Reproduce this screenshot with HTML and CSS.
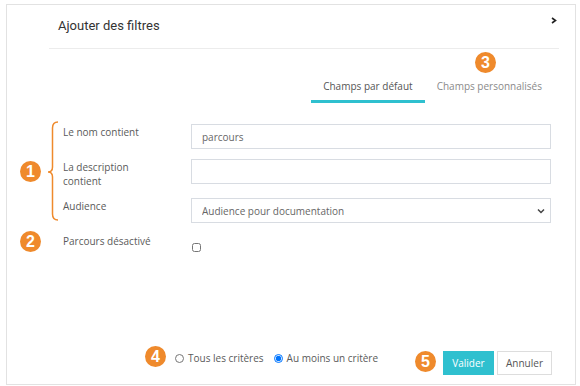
FILE: index.html
```html
<!DOCTYPE html>
<html lang="fr">

<head>
    <meta charset="UTF-8">
    <meta name="viewport" content="width=device-width, initial-scale=1.0">
    <title>Ajouter des filtres</title>
    <link rel="stylesheet" href="styles.css">
</head>

<body>
    <div class="dialog">
        <div class="head">
            <h1 class="title">Ajouter des filtres</h1>
        </div>
        <span class="close">
            <svg width="6" height="7" viewBox="0 0 6 7"><path d="M1 1 L4.5 3.5 L1 6" fill="none" stroke="#222" stroke-width="1.6"/></svg>
        </span>

        <div class="tabs">
            <span class="tab active">Champs par défaut</span>
            <span class="tab">Champs personnalisés</span>
        </div>

        <div class="form">
            <div class="row">
                <label class="lbl">Le nom contient</label>
                <input class="field" type="text" value="parcours">
            </div>
            <div class="row">
                <label class="lbl">La description<br>contient</label>
                <input class="field" type="text" value="">
            </div>
            <div class="row">
                <label class="lbl">Audience</label>
                <div class="select_wrap">
                    <select class="field">
                        <option>Audience pour documentation</option>
                    </select>
                    <svg class="arrow" width="8" height="6" viewBox="0 0 8 6"><path d="M1 1.5 L4 4.5 L7 1.5" fill="none" stroke="#444" stroke-width="1.5"/></svg>
                </div>
            </div>
            <div class="row">
                <label class="lbl">Parcours désactivé</label>
                <input class="check" type="checkbox">
            </div>
        </div>

        <div class="foot">
            <div class="radios">
                <label><input type="radio" name="mode">Tous les critères</label>
                <label><input type="radio" name="mode" checked>Au moins un critère</label>
            </div>
            <div class="btns">
                <button class="btn primary">Valider</button>
                <button class="btn">Annuler</button>
            </div>
        </div>

        <!-- annotations -->
        <svg class="brace" width="12" height="100" viewBox="0 0 12 100"><path d="M11 1 Q5.5 1 5.5 7 L5.5 46 Q5.5 51 1 51 Q5.5 51 5.5 56 L5.5 93 Q5.5 99 11 99" fill="none" stroke="#ef8a2c" stroke-width="1.5"/></svg>
        <span class="badge b1">1</span>
        <span class="badge b2">2</span>
        <span class="badge b3">3</span>
        <span class="badge b4">4</span>
        <span class="badge b5">5</span>
    </div>
</body>

</html>
```

FILE: styles.css
```css
* {
    margin: 0;
    padding: 0;
    box-sizing: border-box;
}

body {
    background: #fff;
    font-family: "Open Sans", "Liberation Sans", sans-serif;
    font-size: 10px;
    color: #5a5a5a;
}

.dialog {
    width: 570px;
    height: 381px;
    margin: 4px 0 0 6px;
    border: 1px solid #e2e2e2;
    position: relative;
    display: flex;
    flex-direction: column;
}

.head {
    height: 44px;
    margin: 0 16px 0 42px;
    padding: 0 0 2px 9px;
    border-bottom: 1px solid #ececec;
    display: flex;
    align-items: center;
}

.title {
    font-family: Roboto, "Liberation Sans", sans-serif;
    font-weight: normal;
    font-size: 13px;
    color: #333;
}

.close {
    position: absolute;
    top: 8px;
    right: 18px;
}

.tabs {
    display: flex;
    justify-content: flex-end;
    margin: 23px 21px 0 0;
}

.tab {
    line-height: 16px;
    padding: 6px 12px;
    border-bottom: 3px solid transparent;
    color: #8a8a8a;
}

.tab.active {
    color: #555;
    border-bottom-color: #2fc0cf;
}

.form {
    margin-top: 21px;
    padding-left: 56px;
    display: flex;
    flex-direction: column;
    gap: 10px;
}

.row {
    display: flex;
    align-items: flex-start;
}

.lbl {
    width: 128px;
    line-height: 14px;
    padding-top: 1px;
}

.field {
    width: 360px;
    height: 25px;
    border: 1px solid #d8dce2;
    padding: 0 10px;
    font-family: "Open Sans", "Liberation Sans", sans-serif;
    font-size: 10px;
    color: #666;
    background: #fff;
    outline: none;
}

.select_wrap {
    position: relative;
}

.select_wrap select {
    appearance: none;
    -webkit-appearance: none;
    border-radius: 0;
}

.arrow {
    position: absolute;
    right: 6px;
    top: 10px;
}

.check {
    width: 9px;
    height: 9px;
    margin: 10px 0 0 1px;
}

.foot {
    margin-top: auto;
    padding: 0 23px 9px 168px;
    display: flex;
    align-items: flex-start;
}

.radios {
    display: flex;
    gap: 10px;
    line-height: 15px;
}

.radios label {
    display: flex;
    align-items: center;
}

.radios input {
    width: 9px;
    height: 9px;
    margin: 0 4px 0 0;
}

.btns {
    margin-left: auto;
    display: flex;
    gap: 3px;
}

.btn {
    height: 24px;
    width: 55px;
    border: 1px solid #ddd;
    background: #fff;
    font-family: "Open Sans", "Liberation Sans", sans-serif;
    font-size: 10px;
    color: #555;
}

.btn.primary {
    background: #2fc0cf;
    border-color: #2fc0cf;
    color: #fff;
    width: 51px;
}

.brace {
    position: absolute;
    left: 40px;
    top: 116px;
}

.badge {
    position: absolute;
    width: 21px;
    height: 21px;
    border-radius: 50%;
    background: #ef8a2c;
    color: #fff;
    font-family: "Liberation Sans", Arial, sans-serif;
    font-weight: bold;
    font-size: 16px;
    line-height: 21px;
    text-align: center;
}

.b1 { left: 13px; top: 156px; }
.b2 { left: 13px; top: 226px; }
.b3 { left: 468px; top: 47px; }
.b4 { left: 138px; top: 341px; }
.b5 { left: 408px; top: 346px; }
```
